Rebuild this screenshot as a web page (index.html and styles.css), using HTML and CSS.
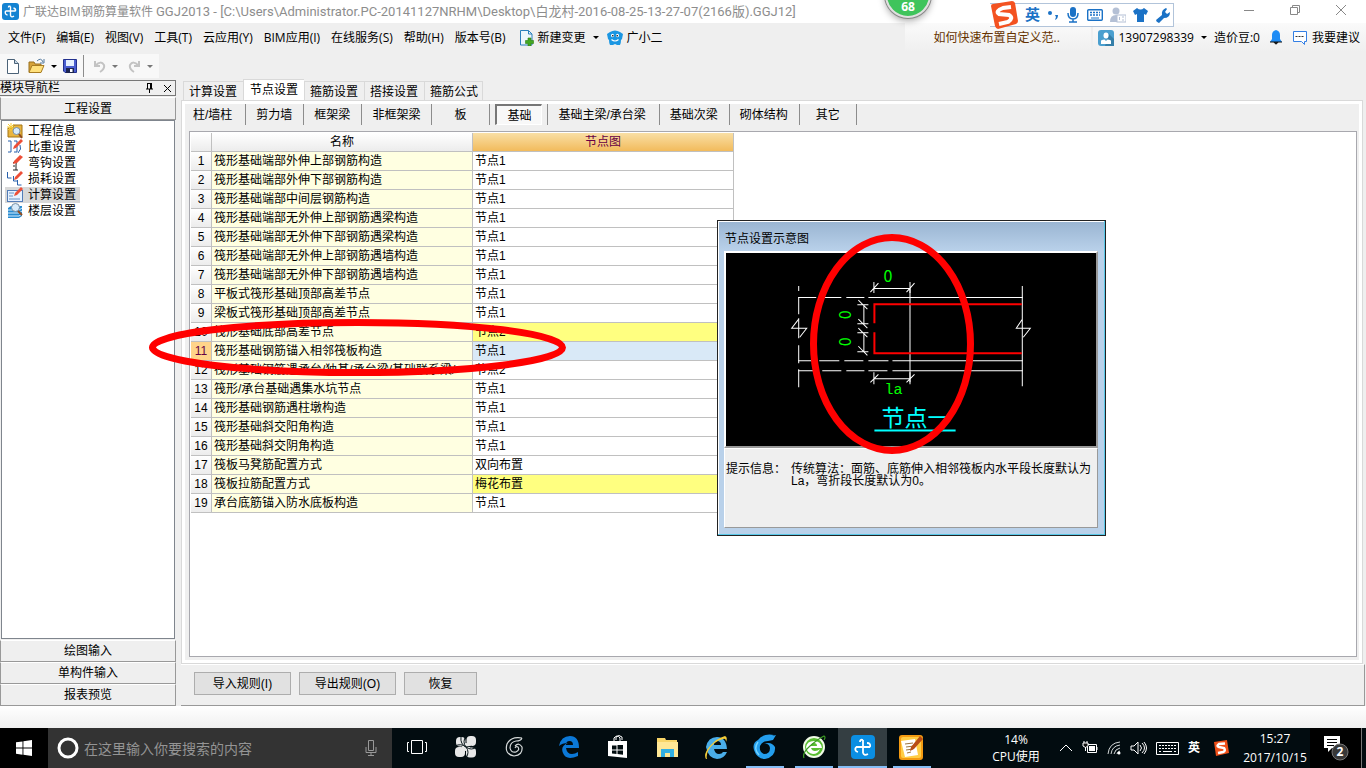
FILE: index.html
```html
<!DOCTYPE html>
<html lang="zh-CN">
<head>
<meta charset="utf-8">
<title>广联达BIM钢筋算量软件 GGJ2013</title>
<link rel="stylesheet" href="styles.css">
</head>
<body>
<header class="titlebar">
  <svg class="app-icon" width="17" height="17" viewBox="0 0 17 17"><rect width="17" height="17" rx="3" fill="#1483d2"/><path d="M8.500 3.500q-2-1-2 1M8.500 3.500v9M3.500 8h10M3.500 8q-1 3.500 2 4M8.500 12.500q1 2.500 3.500.5M13.500 8q.5-2.500-2-3" fill="none" stroke="#fff" stroke-width="1.400"/></svg>
  <h1 class="title">广联达BIM钢筋算量软件 <span class="title-path">GGJ2013 - [C:\Users\Administrator.PC-20141127NRHM\Desktop\白龙村-2016-08-25-13-27-07(2166版).GGJ12]</span></h1>
  <div class="window-buttons">
    <button aria-label="最小化"><svg width="12" height="12" viewBox="0 0 12 12"><path d="M1 6.500h10" stroke="#888"/></svg></button>
    <button aria-label="还原"><svg width="12" height="12" viewBox="0 0 12 12"><path d="M1.500 3.500h7v7h-7zM3.500 3.500v-2h7v7h-2" fill="none" stroke="#888"/></svg></button>
    <button aria-label="关闭"><svg width="12" height="12" viewBox="0 0 12 12"><path d="M1 1l10 10M11 1L1 11" stroke="#888"/></svg></button>
  </div>
</header>

<nav class="menubar">
  <button>文件(F)</button><button>编辑(E)</button><button>视图(V)</button><button>工具(T)</button><button>云应用(Y)</button><button>BIM应用(I)</button><button>在线服务(S)</button><button>帮助(H)</button><button>版本号(B)</button>
  <button class="icon-item change"><svg width="14" height="16" viewBox="0 0 14 16"><path d="M.5.500h8l3.500 3.500v11h-11.500z" fill="#edf6fd" stroke="#2b80bd"/><path d="M8.500.500v3.500h3.500" fill="none" stroke="#2b80bd"/><path d="M8 8h3v2.500h2.500v3h-2.500V16H8v-2.500H5.500v-3H8z" fill="#43a821" stroke="#2d7c12" stroke-width=".6"/></svg>新建变更<i class="caret"></i></button>
  <button class="icon-item"><svg width="16" height="16" viewBox="0 0 16 16"><path d="M3 2q5-3 10 0l3 2-1 5-1 1q0 3-1 5h-3l-2-1-2 1H3q-1-2-1-5L1 9 0 4z" fill="#1b96e2"/><ellipse cx="5.500" cy="5.500" rx="1.500" ry="1.800" fill="#fff"/><ellipse cx="10.500" cy="5.500" rx="1.500" ry="1.800" fill="#fff"/><circle cx="5.800" cy="5.800" r=".8"/><circle cx="10.200" cy="5.800" r=".8"/><path d="M4.500 9.500q3.500 3 7 0" fill="none" stroke="#fff" stroke-width="1.200"/></svg>广小二</button>
  <a class="tip" href="#">如何快速布置自定义范..</a>
  <div class="account">
    <button class="icon-item"><svg width="16" height="16" viewBox="0 0 16 16"><rect width="16" height="16" rx="3" fill="#4a9fcf"/><path d="M11 4l5 5v7H7z" fill="#357fa9"/><ellipse cx="8" cy="5.500" rx="2.500" ry="3" fill="#fff"/><path d="M3 14V10.500q2-1 3.500-1L8 11l1.500-1.500q1.500 0 3.500 1V14z" fill="#fff"/></svg>13907298339<i class="caret"></i></button>
    <button>造价豆:0</button>
    <button aria-label="通知"><svg width="12" height="15" viewBox="0 0 12 15"><path d="M6 0q4 1 4 5v4l2 3H0l2-3V5q0-4 4-5z" fill="#1f8cf5"/><path d="M0 12h12M4 12q2 4 4 0" stroke="#111" fill="#222"/></svg></button>
    <button class="icon-item"><svg width="16" height="16" viewBox="0 0 16 16"><path d="M1.500 1.500h13v10h-2v3l-3-3h-8z" fill="#fff" stroke="#337fe5"/><path d="M3.500 6.500h9" stroke="#333" stroke-dasharray="2 1"/></svg>我要建议</button>
  </div>
</nav>

<div class="toolbar">
  <button class="new" aria-label="新建"><svg width="12" height="15" viewBox="0 0 12 15"><path d="M.5.500h7l4 4v10H.5z" fill="#fff" stroke="#4b6277"/><path d="M7.500.500v4h4" fill="#c6d7e7" stroke="#4b6277"/></svg></button>
  <button aria-label="打开"><svg width="17" height="16" viewBox="0 0 17 16"><path d="M1 14V4h5l1 2h6v8z" fill="#d6a33a" stroke="#99711e"/><path d="M1 14.500l3-7h12l-3 7z" fill="#ffe07b" stroke="#a87c22"/><path d="M9 3q4-4 6 1M16 1v4h-4" fill="none" stroke="#557a9e"/></svg></button>
  <i class="caret"></i>
  <button aria-label="保存"><svg width="14" height="14" viewBox="0 0 14 14"><path d="M.5.500h13v13H2l-1.500-1.500z" fill="#4a5ed0" stroke="#22308d"/><rect x="3" y="1" width="8" height="6" fill="#e5f0ff"/><rect x="3" y="9" width="8" height="5" fill="#1c2450"/><rect x="7" y="10" width="2.500" height="3" fill="#fff"/></svg></button>
  <span class="divider"></span>
  <button aria-label="撤销" disabled><svg width="13" height="13" viewBox="0 0 13 13"><path d="M2 1v5h5M2.500 5.500Q8 0 11 5q1 4-4 7" fill="none" stroke="#c3c3c3" stroke-width="2"/></svg></button>
  <i class="caret dim"></i>
  <button aria-label="重做" disabled><svg width="13" height="13" viewBox="0 0 13 13"><path d="M11 1v5H6M10.500 5.500Q5 0 2 5q-1 4 4 7" fill="none" stroke="#c3c3c3" stroke-width="2"/></svg></button>
  <i class="caret dim"></i>
</div>

<main class="workspace">
  <aside class="sidebar">
    <div class="dock-caption"><span>模块导航栏</span>
      <button aria-label="固定"><svg width="9" height="10" viewBox="0 0 9 10"><path d="M2 .500h5M2.500 0v6M5.500 0v6M6.500 0v6M1 6h7M4.500 6v4" fill="none" stroke="#000"/></svg></button>
      <button aria-label="关闭面板"><svg width="9" height="9" viewBox="0 0 9 9"><path d="M1 1l7 7M8 1L1 8" stroke="#000"/></svg></button>
    </div>
    <button class="section head">工程设置</button>
    <ul class="tree">
      <li><svg width="16" height="16" viewBox="0 0 16 16"><path d="M1 14V5h5l1-3h8v12z" fill="#e9b53f" stroke="#a47514"/><path d="M4 0v8M0 4h8M1 1l6 6M7 1L1 7" stroke="#f8cd35"/><circle cx="9.500" cy="8" r="3.500" fill="#d7ebfa" stroke="#7790a7"/><path d="M12 11l3 4" stroke="#914c1f" stroke-width="2"/></svg>工程信息</li>
      <li><svg width="16" height="16" viewBox="0 0 16 16"><path d="M1 2h3v11H1M7 2h3v11H7" fill="none" stroke="#2860ac"/><path d="M13 6q2 4-2 8" fill="none" stroke="#2860ac"/><path d="M6 10l1-3 7-7 2 2-7 7z" fill="#ed4e37"/></svg>比重设置</li>
      <li><svg width="16" height="16" viewBox="0 0 16 16"><path d="M6 8q4-3 3 2v5M6 15h5M6 11h2" fill="none" stroke="#222"/><path d="M6 9l1-3 6-6 3 2-6 6z" fill="#ed4e37"/></svg>弯钩设置</li>
      <li><svg width="16" height="16" viewBox="0 0 16 16"><path d="M.5 1v6h4M6.500 5v5h4M10.500 9v5h4" fill="none" stroke="#2860ac"/><path d="M7 9l1-3 6-6 2 2-6 6z" fill="#ed4e37"/></svg>损耗设置</li>
      <li class="selected"><svg width="16" height="16" viewBox="0 0 16 16"><rect x=".5" y="3.500" width="15" height="11" fill="#e6f1ff" stroke="#527cb7"/><path d="M2 6h5M2 9h4M2 12h11" stroke="#6991c3"/><path d="M7 9l1-3 6-6 2 2-6 6z" fill="#ed4e37"/></svg>计算设置</li>
      <li><svg width="16" height="16" viewBox="0 0 16 16"><path d="M1 5l3-2h11v10l-3 2H1z" fill="#288bd0"/><path d="M1 7h11l3-2M1 10h11l3-2M1 13h11l3-2" fill="none" stroke="#d7efff"/><circle cx="8.500" cy="4.500" r="4" fill="#d7ebfa" stroke="#7890a5"/><path d="M11 8l4 4" stroke="#914c1f" stroke-width="2"/></svg>楼层设置</li>
    </ul>
    <button class="section">绘图输入</button>
    <button class="section">单构件输入</button>
    <button class="section">报表预览</button>
  </aside>

  <section class="content">
    <div class="tabs" role="tablist">
      <button role="tab">计算设置</button><button role="tab" class="active" aria-selected="true">节点设置</button><button role="tab">箍筋设置</button><button role="tab">搭接设置</button><button role="tab">箍筋公式</button>
    </div>
    <div class="page">
      <div class="subtabs">
        <button>柱/墙柱</button><button>剪力墙</button><button>框架梁</button><button>非框架梁</button><button class="short">板</button><button class="pressed">基础</button><button>基础主梁/承台梁</button><button>基础次梁</button><button>砌体结构</button><button class="last">其它</button>
      </div>
      <div class="grid-panel">
        <table class="grid">
          <colgroup><col class="c-num"><col class="c-name"><col class="c-node"></colgroup>
          <thead><tr><th></th><th>名称</th><th class="hot">节点图</th></tr></thead>
          <tbody>
            <tr><th>1</th><td>筏形基础端部外伸上部钢筋构造</td><td>节点1</td></tr>
            <tr><th>2</th><td>筏形基础端部外伸下部钢筋构造</td><td>节点1</td></tr>
            <tr><th>3</th><td>筏形基础端部中间层钢筋构造</td><td>节点1</td></tr>
            <tr><th>4</th><td>筏形基础端部无外伸上部钢筋遇梁构造</td><td>节点1</td></tr>
            <tr><th>5</th><td>筏形基础端部无外伸下部钢筋遇梁构造</td><td>节点1</td></tr>
            <tr><th>6</th><td>筏形基础端部无外伸上部钢筋遇墙构造</td><td>节点1</td></tr>
            <tr><th>7</th><td>筏形基础端部无外伸下部钢筋遇墙构造</td><td>节点1</td></tr>
            <tr><th>8</th><td>平板式筏形基础顶部高差节点</td><td>节点1</td></tr>
            <tr><th>9</th><td>梁板式筏形基础顶部高差节点</td><td>节点1</td></tr>
            <tr class="changed"><th>10</th><td>筏形基础底部高差节点</td><td>节点2</td></tr>
            <tr class="current"><th>11</th><td>筏形基础钢筋锚入相邻筏板构造</td><td>节点1</td></tr>
            <tr><th>12</th><td>筏形基础钢筋遇承台/独基/承台梁/基础联系梁/</td><td>节点2</td></tr>
            <tr><th>13</th><td>筏形/承台基础遇集水坑节点</td><td>节点1</td></tr>
            <tr><th>14</th><td>筏形基础钢筋遇柱墩构造</td><td>节点1</td></tr>
            <tr><th>15</th><td>筏形基础斜交阳角构造</td><td>节点1</td></tr>
            <tr><th>16</th><td>筏形基础斜交阴角构造</td><td>节点1</td></tr>
            <tr><th>17</th><td>筏板马凳筋配置方式</td><td>双向布置</td></tr>
            <tr class="changed"><th>18</th><td>筏板拉筋配置方式</td><td>梅花布置</td></tr>
            <tr><th>19</th><td>承台底筋锚入防水底板构造</td><td>节点1</td></tr>
          </tbody>
        </table>
      </div>
    </div>
    <div class="actions">
      <button class="wide">导入规则(I)</button><button class="wide">导出规则(O)</button><button>恢复</button>
    </div>
  </section>
</main>
<div class="statusbar"></div>

<footer class="taskbar">
  <button class="start" aria-label="开始"><svg width="16" height="16" viewBox="0 0 16 16"><path d="M0 2.300L6.500 1.400V7.600H0zM7.400 1.200L16 0v7.600H7.400zM0 8.500h6.500v6.200L0 13.800zM7.400 8.500H16V16l-8.600-1.200z" fill="#fff"/></svg></button>
  <div class="search">
    <svg width="22" height="22" viewBox="0 0 22 22"><circle cx="11" cy="11" r="9" fill="none" stroke="#fff" stroke-width="3"/></svg>
    <input type="text" aria-label="搜索" placeholder="在这里输入你要搜索的内容">
    <svg width="12" height="18" viewBox="0 0 12 18"><path d="M3.500 1.500h5v10h-5zM1 8v5.500h10V8M6 13.500v3M3 16.500h6" fill="none" stroke="#999"/></svg>
  </div>
  <div class="apps">
    <button aria-label="任务视图"><svg width="22" height="16" viewBox="0 0 22 16"><path d="M5.500 1.500h11v13h-11zM3 3.500H1.500v9H3M19 3.500h1.500v9H19" fill="none" stroke="#fff"/></svg></button>
    <button aria-label="风扇"><svg width="22" height="22" viewBox="0 0 22 22"><rect x="1" y="1" width="9.500" height="9.500" rx="4" fill="#e8e8e8"/><rect x="11.500" y="0" width="9.500" height="10" rx="4" fill="#e8e8e8"/><rect x="0" y="11" width="10" height="10" rx="4" fill="#e8e8e8"/><rect x="11" y="11.500" width="10" height="10" rx="4" fill="#e8e8e8"/><circle cx="11" cy="11" r="4" fill="#e8e8e8"/><path d="M11 0q-4 6 0 11t0 11M0 10q6-3 11 1t11 0M6 1q-1 7 5 10M21 12q-4-3-10-1" fill="none" stroke="#08161a"/></svg></button>
    <button aria-label="G 浏览器"><svg width="20" height="20" viewBox="0 0 20 20"><path d="M17 1Q6-1 2 7q-3 10 7 12 9-1 8-9-3-5-7-1M17 1Q16 4 11 4 5 5 5 11q1 5 6 4 4-2 2-5-2-1-3 1" fill="none" stroke="#d6dada" stroke-width="1.200"/></svg></button>
    <button class="edge" aria-label="Edge"><svg width="20" height="22" viewBox="0 0 20 22"><path d="M0 10Q2 0 11 0t9 12H7q1 6 6 6 3 0 6-2v4Q7 25 4 17 1 10 9 7 3 7 0 10zm7-1h7q0-4-3.500-4T7 9z" fill="#0b78d7" fill-rule="evenodd"/></svg></button>
    <button aria-label="应用商店"><svg width="20" height="24" viewBox="0 0 20 24"><path d="M6 6V3q3-4 6 0v3M8 5V2q3-3 6 0v3" fill="none" stroke="#fff"/><path d="M0 6h19v17L0 21z" fill="#fff"/><path d="M4 10.500h4.500v4H4zM9.500 10H15v4.500H9.500zM4 15.500h4.500V19L4 18.500zM9.500 15.500H15v4.300l-5.500-.8z" fill="#020d10"/></svg></button>
    <button aria-label="文件资源管理器"><svg width="22" height="19" viewBox="0 0 22 19"><path d="M1 0h8l1 2h11v17H1z" fill="#f8d568"/><path d="M1 4h21v15H1z" fill="#ffe795"/><path d="M5 11h13v8h-4v-4H9v4H5z" fill="#32afe2"/></svg></button>
    <button aria-label="Internet Explorer"><svg width="24" height="26" viewBox="0 0 24 26"><path d="M2 13Q4 3 13 3t10 12H10q1 5 5 5 3 0 4-2h4q-3 7-10 7-9-1-11-12zm8-2h7q0-4-4-4-3 0-3 4z" fill="#4aaee9" fill-rule="evenodd"/><path d="M2 25q-3-5 4-13T21 2q3 1 1 6 0-4-3-3Q10 7 4 17q-2 5-1 8z" fill="#f4cd39"/></svg></button>
    <button class="running" aria-label="G 云"><svg width="24" height="26" viewBox="0 0 24 26"><path d="M21 1Q10-1 5 6-1 9 1 16q3 9 11 9 11-2 10-12-4-6-11-3 5-1 6 4 0 6-6 6-5-2-4-8 2-5 8-5l5-1 3-5-4 1z" fill="#239eed"/><path d="M5 8q-5 7 1 13" fill="none" stroke="#72d4ff" stroke-width="1.500"/></svg></button>
    <button class="running" aria-label="360 浏览器"><svg width="24" height="24" viewBox="0 0 24 24"><circle cx="12" cy="12" r="10" fill="#59bd31" stroke="#f1fbe7" stroke-width="2"/><path d="M4 12q1-6 8-6t8 7H9q1 3 4 3t5-2q-2 5-7 5-6-1-7-7zm5-1h6q0-3-3-3t-3 3z" fill="#fff" fill-rule="evenodd"/><path d="M2 23q-2-5 6-12T22 1q2 1 0 4" fill="none" stroke="#3d9b25" stroke-width="1.200"/></svg></button>
    <button class="running current" aria-label="广联达"><svg width="24" height="24" viewBox="0 0 24 24"><rect width="24" height="24" rx="4" fill="#0b8ee2"/><path d="M12 5q-3-1-3 2M12 5v13M5 12h14M5 12q-2 4 2 5M12 18q1 3 5 1M19 12q1-4-3-4" fill="none" stroke="#fff" stroke-width="1.800"/></svg></button>
    <button class="running" aria-label="记事"><svg width="25" height="25" viewBox="0 0 25 25"><rect width="24" height="25" rx="3" fill="#f49b12"/><rect x="2" y="2" width="20" height="21" rx="2" fill="#ffcd45"/><path d="M2 6l14-2 3 16-13 2z" fill="#fff"/><path d="M6 9l8-1M7 12l8-1M7 15l7-1M8 18l4-1" stroke="#9b753f"/><path d="M11 16l1-4 9-11 3 3-9 10z" fill="#b84c14"/></svg></button>
  </div>
  <div class="tray">
    <div class="cpu">14%<br>CPU使用</div>
    <svg width="14" height="8" viewBox="0 0 14 8"><path d="M1 7l6-6 6 6" fill="none" stroke="#fff"/></svg>
    <svg width="16" height="14" viewBox="0 0 16 14"><path d="M5.500 3.500h9v8h-9zM15 6v3" fill="none" stroke="#fff"/><path d="M7 5h6v5H7z" fill="#fff"/><path d="M1 2h5v3q-2.500 3-5 0zM2 0v2M5 0v2M3.500 6v4" fill="#111" stroke="#fff"/></svg>
    <svg width="14" height="14" viewBox="0 0 14 14"><path d="M1 13Q2 2 13 1M4 13q1-8 9-9M7 13q1-5 6-6M10 13q0-2 3-3" fill="none" stroke="#d6dada"/><circle cx="12" cy="12" r="1.500" fill="#fff"/></svg>
    <svg width="17" height="14" viewBox="0 0 17 14"><path d="M1 5h3l4-4v12L4 9H1zM10 4q3 3 0 6M12 2q5 5 0 10M14 1q5 6 0 12" fill="none" stroke="#fff"/></svg>
    <svg width="23" height="13" viewBox="0 0 23 13"><path d="M.5.500h22v12H.5z" fill="none" stroke="#fff"/><path d="M3 3.500h17M3 6.500h17" stroke="#fff" stroke-dasharray="2 1"/><path d="M3 9.500h2M7 9.500h9M18 9.500h2" stroke="#fff"/></svg>
    <span class="ime">英</span>
    <svg width="16" height="16" viewBox="0 0 16 16"><path d="M1 2l13-2 2 13-13 3z" fill="#f05019"/><path d="M12 3.500L6 4Q3 6 6 7l5 1q2 3-1 4l-5 1" fill="none" stroke="#fff" stroke-width="2.500"/></svg>
    <div class="clock">15:27<br>2017/10/15</div>
    <button class="notice" aria-label="操作中心"><svg width="26" height="26" viewBox="0 0 26 26"><path d="M1 1h16v12H9l-4 4v-4H1z" fill="#fff"/><path d="M4 4.500h10M4 7.500h10M4 10.500h7" stroke="#000"/><circle cx="17" cy="17" r="8" fill="#383838" stroke="#777"/><text x="17" y="21" class="badge-num">2</text></svg></button>
  </div>
</footer>

<div class="ball">68</div>
<div class="ime-bar">
  <svg width="28" height="28" viewBox="0 0 28 28"><path d="M1 5Q1 3 3 3L22 0q2 0 3 2l3 18q0 2-2 3L8 28q-2 0-3-3z" fill="#f35221"/><path d="M21 6l-8 1q-8 3-4 6l10 1q5 3-1 7l-9 2" fill="none" stroke="#fff" stroke-width="4"/></svg>
  <b>英</b>
  <svg width="12" height="14" viewBox="0 0 12 14"><circle cx="3" cy="5" r="2" fill="#1b72c6"/><path d="M8 7h3q0 4-3 5l1-3z" fill="#1b72c6"/></svg>
  <svg width="14" height="16" viewBox="0 0 14 16"><rect x="4" width="6" height="10" rx="3" fill="#1b72c6"/><path d="M2 6q0 6 5 6t5-6M7 12v3M3 15h8" fill="none" stroke="#1b72c6" stroke-width="1.500"/></svg>
  <svg width="16" height="12" viewBox="0 0 16 12"><rect x=".7" y=".7" width="14.600" height="10.600" rx="1" fill="#fff" stroke="#1b72c6" stroke-width="1.400"/><path d="M3 3.500h10M3 6h10" stroke="#1b72c6" stroke-width="1.400" stroke-dasharray="2 1"/><path d="M4 9h8" stroke="#1b72c6"/></svg>
  <svg width="16" height="16" viewBox="0 0 16 16"><circle cx="6" cy="4" r="3.500" fill="#b4c0d5"/><path d="M0 15q0-7 6-7t6 7z" fill="#b4c0d5"/><rect x="7" y="8" width="9" height="7" fill="#fff" stroke="#b4c0d5"/><path d="M9.500 10v3M12 10h2M12 13h2" stroke="#b4c0d5"/></svg>
  <svg width="15" height="14" viewBox="0 0 15 14"><path d="M4 0q3.500 3 7 0l4 3-2 4-2-1v8H4V6L2 7 0 3z" fill="#1b72c6"/></svg>
  <svg width="15" height="15" viewBox="0 0 15 15"><path d="M1 12L7 7q-1-5 4-7l1 1-2 3 2 2 3-2q0 6-6 6l-5 5q-3-1-3-3z" fill="#1b72c6"/></svg>
</div>

<section class="dialog" role="dialog" aria-label="节点设置示意图">
  <h2>节点设置示意图</h2>
  <svg class="drawing" viewBox="727 253 369 192">
    <g fill="none" stroke="#fff">
      <path d="M799.500 286v5M799.500 297v17M799.500 318v20M799.500 345v18M799.500 369v18"/>
      <path d="M799 297.500h18M823 297.500h19M847 297.500h18M869 297.500h154M799 360.500h15M820 360.500h20M845 360.500h19M869 360.500h20M893 360.500h130M799 370.500h18M823 370.500h19M847 370.500h18M869 370.500h19M893 370.500h130"/>
      <path d="M910.500 288v94M1022.500 286v100M799.500 319l-7 9h15l-7 9M1022.500 319l-6 9h14l-7 9"/>
      <path d="M874.500 282v11M874 288.500h37M910.500 282v11M871 292l8-9M907 292l8-9M874.500 372v12M874 378.500h37M910.500 372v12M871 382l8-8M907 382l8-8"/>
      <path d="M864.500 304v20M858 304.500h11M858 323.500h11M859 300l9 9M859 319l9 9M864.500 332v20M858 332.500h11M858 351.500h11M859 328l9 9M859 346l9 9"/>
    </g>
    <path d="M1022 304H875v19M875 332v21h147" fill="none" stroke="#f00" stroke-width="2"/>
    <text x="884" y="282" class="dim-text">0</text>
    <text x="885" y="394" class="len-text">la</text>
    <text class="dim-text" transform="translate(852 319) rotate(-90)">0</text>
    <text class="dim-text" transform="translate(852 346) rotate(-90)">0</text>
    <text x="882" y="426" class="node-text">节点一</text>
    <path d="M875 430h81" stroke="#0ff" stroke-width="2"/>
  </svg>
  <div class="info"><span>提示信息：</span><p>传统算法：面筋、底筋伸入相邻筏板内水平段长度默认为La，弯折段长度默认为0。</p></div>
</section>

<svg class="markup" width="1000" height="500" viewBox="0 0 1000 500"><g fill="none" stroke="#f00" stroke-width="7"><ellipse cx="357.500" cy="347.500" rx="205" ry="25"/><ellipse cx="892" cy="344" rx="78.500" ry="106.500"/></g></svg>
</body>
</html>
```

FILE: styles.css
```css
* { box-sizing: border-box; }

body {
  margin: 0;
  height: 100vh;
  display: flex;
  flex-direction: column;
  overflow: hidden;
  position: relative;
  background: #efefef;
  color: #000;
  font: 12px/16px "Liberation Sans", "Noto Sans CJK SC", sans-serif;
}

button {
  margin: 0;
  padding: 0;
  border: 0;
  background: none;
  color: inherit;
  font: inherit;
  white-space: nowrap;
}

svg { display: block; flex: none; }

/* Title bar */
.titlebar {
  display: flex;
  align-items: center;
  height: 23px;
  padding-left: 2px;
  background: #fff;
}
.title {
  flex: 1;
  margin: 0 0 0 4px;
  color: #8d8d8d;
  font: 12px/20px "Open Sans", "Noto Sans CJK SC", sans-serif;
  white-space: nowrap;
}
.title-path { font-family: Roboto, "Noto Sans CJK SC", sans-serif; font-size: 13px; }
.window-buttons { display: flex; gap: 34px; padding: 0 19px 3px 0; }

/* Menu bar */
.menubar {
  display: flex;
  align-items: center;
  height: 29px;
  padding-left: 8px;
  gap: 11px;
  font-family: "Open Sans", "Noto Sans CJK SC", sans-serif;
}
.icon-item { display: flex; align-items: center; gap: 4px; }
.change { margin-left: 3px; }
.caret {
  flex: none;
  width: 0;
  margin: 0 -3px 0 3px;
  border: 3px solid transparent;
  border-top-color: #000;
  border-bottom: 0;
}
.caret.dim { border-top-color: #777; }
.tip {
  margin-left: auto;
  margin-right: -9px;
  width: 186px;
  padding-left: 28px;
  line-height: 29px;
  color: #663300;
  text-decoration: none;
  background: linear-gradient(#fafafa, #efefef);
}
.account {
  display: flex;
  align-items: center;
  gap: 10px;
  height: 29px;
  padding: 0 6px 0 5px;
  background: linear-gradient(#fafafa, #efefef);
}

/* Toolbar */
.toolbar {
  display: flex;
  align-items: center;
  align-self: flex-start;
  gap: 6px;
  height: 24px;
  margin-top: 2px;
  padding: 0 2px 0 7px;
  background: #f8f8f8;
}
.toolbar .new { margin-right: 3px; }
.toolbar .caret { margin: 0; }
.toolbar .caret.dim { margin-right: 4px; }
.divider { width: 1px; height: 22px; margin-right: 3px; background: #8c8c8c; }

/* Workspace */
.workspace {
  flex: 1;
  min-height: 0;
  display: flex;
  gap: 5px;
  padding: 1px 1px 0 0;
}
.sidebar { display: flex; flex-direction: column; width: 176px; }
.dock-caption {
  display: flex;
  align-items: center;
  gap: 9px;
  height: 16px;
  margin: 1px 0;
  padding-right: 3px;
  border: 1px solid #777;
  border-left: 0;
}
.dock-caption span { flex: 1; }
.section {
  height: 22px;
  border: 1px solid #fff;
  border-right-color: #999;
  border-bottom-color: #999;
  border-left-color: #999;
}
.section.head { height: 23px; }
.tree {
  flex: 1;
  margin: 0 1px 1px;
  padding: 2px 3px;
  list-style: none;
  background: #fff;
  border: 1px solid #7f858d;
}
.tree li {
  display: flex;
  gap: 5px;
  width: 75px;
  padding-left: 2px;
  white-space: nowrap;
}
.tree .selected { background: #d8d8d8; }

.content { flex: 1; min-width: 0; display: flex; flex-direction: column; }
.tabs { display: flex; align-items: flex-end; height: 21px; padding-left: 2px; }
.tabs button {
  height: 19px;
  padding: 1px 6px 0 5px;
  border: 1px solid #d9d9d9;
  border-right: 0;
  border-bottom: 0;
}
.tabs button:last-child { padding-right: 4px; border-right: 1px solid #d9d9d9; }
.tabs .active { height: 21px; padding: 0 6px; background: #fff; }
.page {
  flex: 1;
  min-height: 0;
  display: flex;
  flex-direction: column;
  margin-right: 2px;
  padding: 0 4px 3px;
  background: #efefef;
  border: 1px solid #d9d9d9;
  box-shadow: inset 0 0 0 3px #fff;
}
.subtabs { display: flex; margin-top: 3px; height: 21px; }
.subtabs button {
  padding: 0 11px 0 10px;
  border-right: 1px solid #8c8c8c;
}
.subtabs button:first-child { padding: 0 13px 0 7px; }
.subtabs .short { padding: 0 23px 0 22px; }
.subtabs .pressed {
  margin: 0 5px;
  padding: 2px 10px 0;
  background: #f8f8f8;
  border: 1px solid #fff;
  border-top: 2px solid #777;
  border-left: 2px solid #777;
}
.subtabs .pressed + button { padding-right: 13px; border-left: 1px solid #8c8c8c; }
.subtabs .last { padding: 0 16px; }
.grid-panel {
  flex: 1;
  min-height: 0;
  margin: 6px 1px 3px 3px;
  padding: 1px;
  background: #fff;
  border: 1px solid #a8a8ae;
}
.grid { table-layout: fixed; width: 543px; border-collapse: separate; border-spacing: 0; }
.c-num { width: 21px; }
.c-name, .c-node { width: 261px; }
.grid th, .grid td {
  height: 19px;
  padding: 0 2px;
  border-right: 1px solid #c0c0c0;
  border-bottom: 1px solid #c0c0c0;
  font-weight: normal;
  line-height: 16px;
  overflow: hidden;
  white-space: nowrap;
}
.grid th { padding: 0; text-align: center; background: linear-gradient(#fff, #ececec); }
.grid .hot { background: linear-gradient(#f9dfa5, #f2bb5c); color: #660044; }
.grid td:nth-child(2) { background: #ffffe1; }
.grid .changed td:last-child { background: #ffff80; }
.grid .current th { background: #ffd48a; color: #660044; }
.grid .current td:last-child { background: #d9e9f7; }

.actions {
  display: flex;
  align-items: center;
  gap: 8px;
  height: 42px;
  padding: 0 13px 3px;
  border-top: 1px solid #fff;
  border-right: 1px solid #999;
  border-bottom: 1px solid #999;
}
.actions button { width: 73px; height: 23px; background: #e1e1e1; border: 1px solid #adadad; }
.actions .wide { width: 97px; }
.statusbar { height: 22px; background: linear-gradient(#fff, #f0f0f0); }

/* Taskbar */
.taskbar {
  display: flex;
  height: 40px;
  background: #020c10;
  color: #fff;
  font-family: "Open Sans", "Noto Sans CJK SC", sans-serif;
}
.taskbar button { display: flex; align-items: center; justify-content: center; }
.start { width: 48px; background: #000; }
.search {
  display: flex;
  align-items: center;
  width: 344px;
  padding: 0 15px 0 9px;
  gap: 5px;
  background: #333;
}
.search input {
  flex: 1;
  min-width: 0;
  padding: 0;
  border: 0;
  background: none;
  color: #fff;
  font: 14px/20px "Noto Sans CJK SC", sans-serif;
}
.search input::placeholder { color: #949494; }
.apps { display: flex; }
.apps button { width: 49px; border-bottom: 2px solid transparent; }
.apps .edge { margin-left: 5px; }
.apps .running {
  background: linear-gradient(#85bdf5, #85bdf5) center bottom / 38px 2px no-repeat border-box;
}
.apps .current { background: #343e42; border-bottom-color: #85bdf5; }
.tray { display: flex; align-items: center; gap: 9px; margin-left: auto; }
.cpu { width: 68px; text-align: center; line-height: 17px; }
.ime { margin-right: 4px; font-weight: bold; }
.clock { width: 74px; margin-right: -11px; text-align: center; line-height: 19px; }
.notice { width: 52px; height: 40px; background: #000; border-right: 1px solid #777; margin-right: 4px; }
.badge-num { font: bold 12px "Open Sans", sans-serif; fill: #fff; text-anchor: middle; }

/* Floating pieces */
.ball {
  position: absolute;
  left: 885px;
  top: -28px;
  width: 46px;
  height: 46px;
  padding-top: 25px;
  border: 2px solid #e0e0e0;
  border-radius: 50%;
  background: #3fc45c;
  box-shadow: 0 0 0 1px #888, 0 3px 7px #aaa;
  color: #fff;
  font: bold 12px/16px "Open Sans", sans-serif;
  text-align: center;
}
.ime-bar {
  position: absolute;
  right: 192px;
  top: 3px;
  display: flex;
  align-items: center;
  gap: 7px;
  height: 24px;
  padding-right: 3px;
  background: #fff;
  border: 1px solid #b2c4da;
  border-left: 0;
  color: #1b72c6;
  font-size: 15px;
}

.dialog {
  position: absolute;
  left: 717px;
  top: 220px;
  width: 389px;
  padding: 8px 7px 7px 6px;
  border: 1px solid #222;
  background: linear-gradient(#99b4d1, #b9d1ea 30px);
  box-shadow: inset -1px -1px 0 #58c8e8, inset 1px 1px 0 #fff;
}
.dialog h2 {
  margin: 0 0 2px;
  padding-left: 1px;
  font: 12px/20px "Liberation Sans", "Noto Sans CJK SC", sans-serif;
}
.drawing {
  width: 100%;
  background: #000;
  border: 2px solid #fff;
  border-right-color: #999;
  border-bottom-color: #999;
}
.dim-text { font: 16px "Noto Sans CJK SC", sans-serif; fill: #0f0; }
.len-text { font: 15px "Liberation Mono", monospace; fill: #0f0; }
.node-text { font: 23px "Noto Sans CJK SC", sans-serif; fill: #0ff; }
.info {
  display: flex;
  gap: 5px;
  height: 80px;
  padding: 14px 0 0 1px;
  background: #efefef;
  border: 1px solid #fff;
  border-right-color: #999;
  border-bottom-color: #999;
  line-height: 12px;
}
.info span { flex: none; }
.info p { margin: 0; }
.markup { position: absolute; left: 0; top: 0; pointer-events: none; }
```
